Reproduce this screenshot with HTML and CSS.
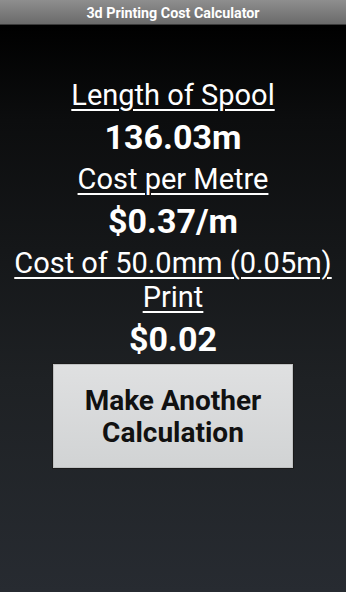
FILE: index.html
```html
<!DOCTYPE html>
<html>
<head>
<meta charset="utf-8">
<link rel="stylesheet" href="styles.css">
</head>
<body>
<div class="titlebar">3d Printing Cost Calculator</div>
<main class="content">
  <div class="label">Length of Spool</div>
  <div class="value">136.03m</div>
  <div class="label">Cost per Metre</div>
  <div class="value">$0.37/m</div>
  <div class="label">Cost of 50.0mm (0.05m) Print</div>
  <div class="value">$0.02</div>
  <button class="btn">Make Another Calculation</button>
</main>
</body>
</html>
```
FILE: styles.css
```css
html, body {
  margin: 0;
  padding: 0;
  height: 100%;
}
body {
  width: 346px;
  height: 592px;
  overflow: hidden;
  font-family: Roboto, "Liberation Sans", sans-serif;
  background: linear-gradient(to bottom, #000000 25px, #0c0d0e 120px, #1e2124 380px, #272b31 592px);
  color: #fff;
  display: flex;
  flex-direction: column;
}
.titlebar {
  height: 25px;
  line-height: 26px;
  text-align: center;
  font-size: 14.3px;
  font-weight: bold;
  color: #fff;
  background: linear-gradient(to bottom, #8e8e8e, #6a6a6a);
  border-bottom: 1px solid #3a3a3a;
  box-sizing: border-box;
}
.content {
  display: flex;
  flex-direction: column;
  align-items: center;
  padding-top: 53px;
}
.label {
  font-size: 29px;
  line-height: 34px;
  text-decoration: underline;
  text-decoration-thickness: 2px;
  text-underline-offset: 4px;
  text-align: center;
  width: 336px;
}
.value {
  font-size: 34px;
  font-weight: bold;
  line-height: 49px;
  padding-top: 1px;
}
.btn {
  margin-top: -1px;
  width: 242px;
  height: 106px;
  flex-shrink: 0;
  box-sizing: border-box;
  background: linear-gradient(to bottom, #dfe0e1, #d1d3d4);
  border: 1px solid #1a1a1a;
  box-shadow: inset 0 0 0 1px #bfc1c2;
  border-radius: 0;
  font-family: Roboto, "Liberation Sans", sans-serif;
  font-size: 28px;
  font-weight: bold;
  line-height: 32px;
  color: #111;
  padding: 2px 20px 0;
}
```
